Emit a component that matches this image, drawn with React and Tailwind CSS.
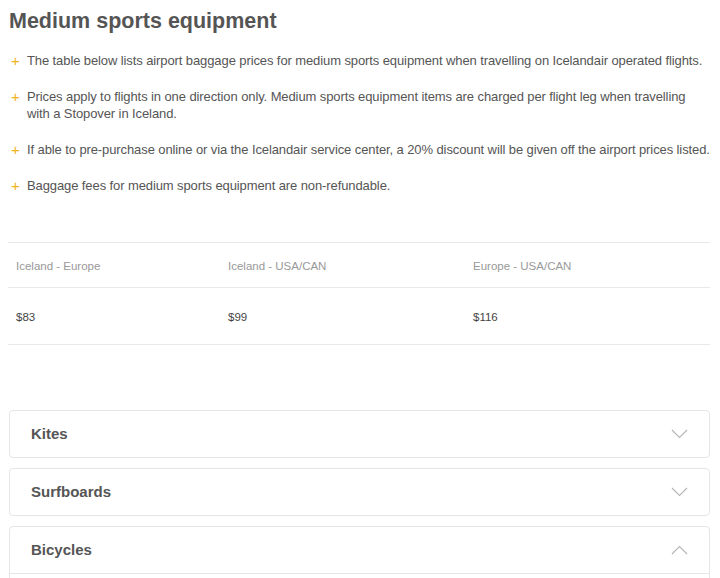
const NOTES = [
  ['The table below lists airport baggage prices for medium sports equipment when travelling on Icelandair operated flights.'],
  ['Prices apply to flights in one direction only. Medium sports equipment items are charged per flight leg when travelling', 'with a Stopover in Iceland.'],
  ['If able to pre-purchase online or via the Icelandair service center, a 20% discount will be given off the airport prices listed.'],
  ['Baggage fees for medium sports equipment are non-refundable.'],
]

const ROUTES = [
  { route: 'Iceland - Europe', price: '$83' },
  { route: 'Iceland - USA/CAN', price: '$99' },
  { route: 'Europe - USA/CAN', price: '$116' },
]

const ITEMS = [
  { name: 'Kites', open: false },
  { name: 'Surfboards', open: false },
  { name: 'Bicycles', open: true },
]

function Chevron({ up }) {
  return (
    <svg width="17" height="10" viewBox="0 0 17 10" fill="none" stroke="#b5b5b5" strokeWidth="1.1">
      {up ? <polyline points="1,9 8.5,1.5 16,9" /> : <polyline points="1,1 8.5,8.5 16,1" />}
    </svg>
  )
}

export default function App() {
  return (
    <div className="w-[720px] h-[578px] overflow-hidden bg-white font-['Liberation_Sans',Arial,sans-serif] text-[#555]">
      <div className="w-[702px] ml-2">
        {/* Heading */}
        <h1 className="pt-[7px] pl-px text-[21.5px] leading-[28px] font-bold text-[#555]">Medium sports equipment</h1>

        {/* Notes */}
        <ul className="mt-[17px] flex flex-col gap-[19px] pl-[3px]">
          {NOTES.map((lines, i) => (
            <li key={i} className="flex text-[13px] leading-[17px] tracking-[-0.1px] text-[#555]">
              <span className="w-4 shrink-0 text-[#f0b323] text-[15px] leading-[17px] tracking-normal">+</span>
              <span className="whitespace-nowrap">
                {lines[0]}
                {lines[1] && <><br />{lines[1]}</>}
              </span>
            </li>
          ))}
        </ul>

        {/* Price table */}
        <div className="mt-[48px] border-t border-b border-[#e8e8e8]">
          <div className="grid grid-cols-[212px_245px_1fr] h-[45px] items-center border-b border-[#e8e8e8]">
            {ROUTES.map(r => (
              <div key={r.route} className="pl-2 pt-[3px] text-[11.5px] text-[#999]">{r.route}</div>
            ))}
          </div>
          <div className="grid grid-cols-[212px_245px_1fr] h-[56px] items-center">
            {ROUTES.map(r => (
              <div key={r.route} className="pl-2 pt-[3px] text-[11.5px] text-[#444]">{r.price}</div>
            ))}
          </div>
        </div>

        {/* Accordion */}
        <div className="mt-[65px] ml-px w-[701px] flex flex-col gap-[10px]">
          {ITEMS.map(it => (
            <div key={it.name} className="rounded border border-[#e6e6e6] bg-white">
              <div className="h-[46px] flex items-center justify-between pl-[21px] pr-[21px]">
                <span className="text-[15px] font-bold text-[#555]">{it.name}</span>
                <Chevron up={it.open} />
              </div>
              {it.open && <div className="h-10 border-t border-[#e6e6e6]" />}
            </div>
          ))}
        </div>
      </div>
    </div>
  )
}
